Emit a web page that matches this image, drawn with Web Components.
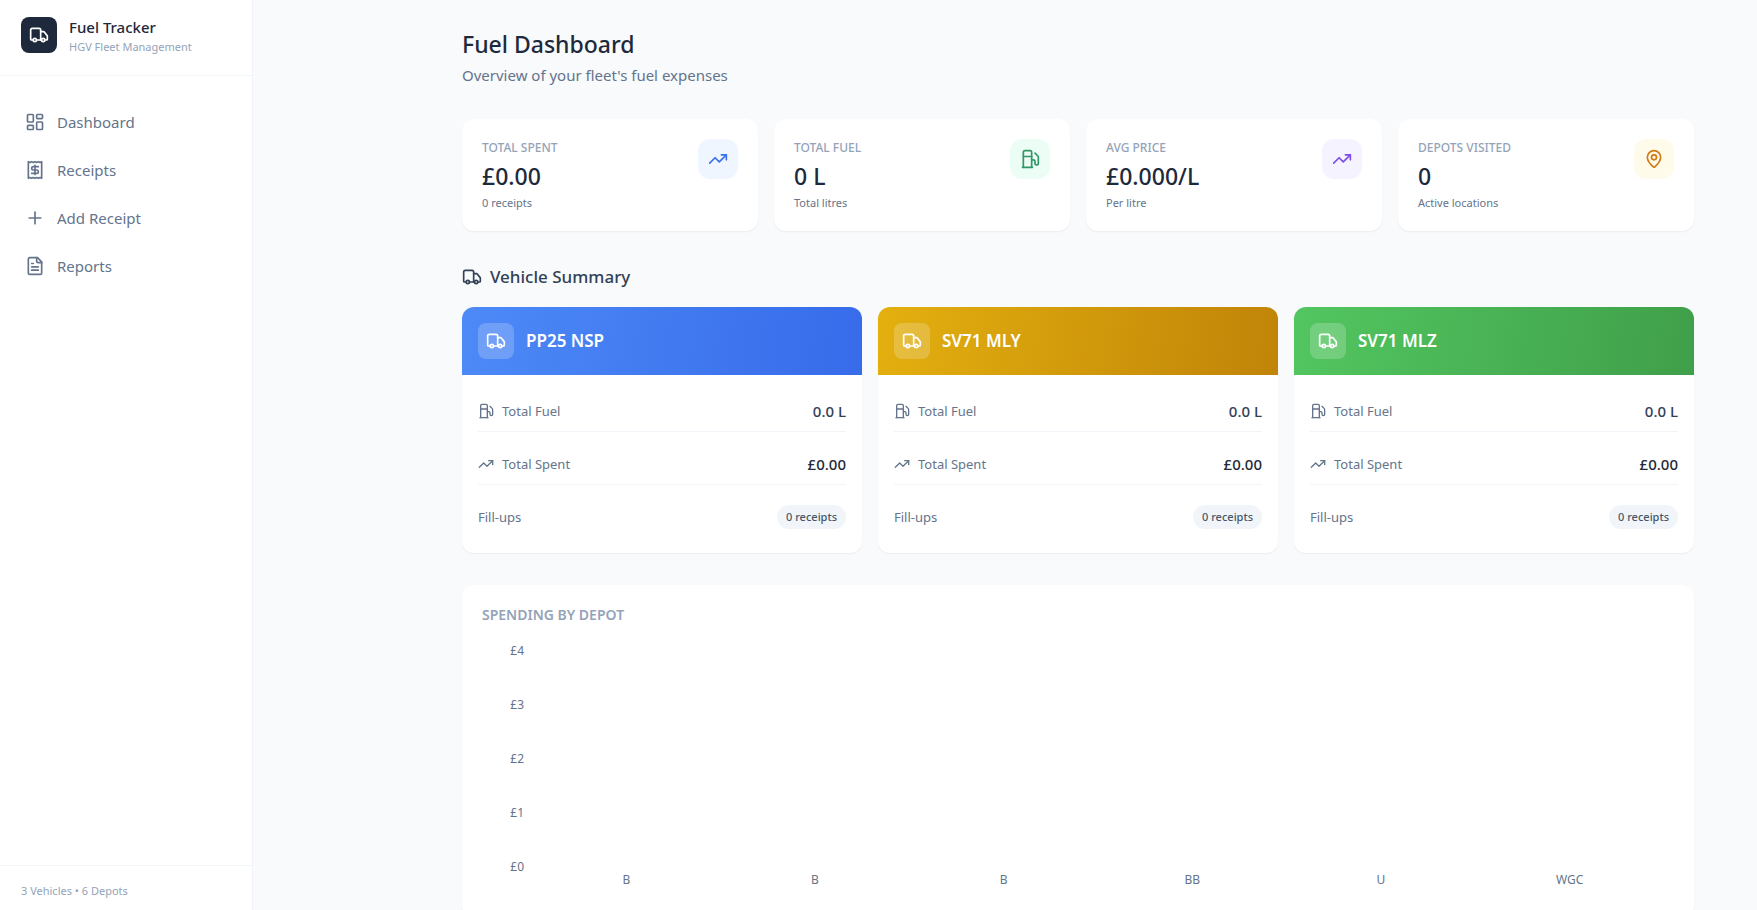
<!DOCTYPE html>
<html lang="en">
<head>
<meta charset="utf-8">
<meta name="viewport" content="width=device-width, initial-scale=1">
<title>Fuel Tracker</title>
<style>
  body { margin: 0; font-family: "Noto Sans", "Open Sans", sans-serif; color: #1e293b; background: #f8fafc; }
</style>
</head>
<body>
<fuel-app></fuel-app>
<script>
const ICONS = {
  truck: '<path d="M14 18V6a2 2 0 0 0-2-2H4a2 2 0 0 0-2 2v11a1 1 0 0 0 1 1h2"/><path d="M15 18H9"/><path d="M19 18h2a1 1 0 0 0 1-1v-3.65a1 1 0 0 0-.22-.624l-3.48-4.35A1 1 0 0 0 17.52 8H14"/><circle cx="17" cy="18" r="2"/><circle cx="7" cy="18" r="2"/>',
  dashboard: '<rect width="7" height="9" x="3" y="3" rx="1"/><rect width="7" height="5" x="14" y="3" rx="1"/><rect width="7" height="9" x="14" y="12" rx="1"/><rect width="7" height="5" x="3" y="16" rx="1"/>',
  receipt: '<path d="M4 2v20l2-1 2 1 2-1 2 1 2-1 2 1 2-1 2 1V2l-2 1-2-1-2 1-2-1-2 1-2-1-2 1Z"/><path d="M16 8h-6a2 2 0 1 0 0 4h4a2 2 0 1 1 0 4H8"/><path d="M12 17.5v-11"/>',
  plus: '<path d="M5 12h14"/><path d="M12 5v14"/>',
  file: '<path d="M15 2H6a2 2 0 0 0-2 2v16a2 2 0 0 0 2 2h12a2 2 0 0 0 2-2V7Z"/><path d="M14 2v4a2 2 0 0 0 2 2h4"/><path d="M10 9H8"/><path d="M16 13H8"/><path d="M16 17H8"/>',
  trend: '<path d="M22 7l-8.5 8.5-5-5L2 17"/><path d="M16 7h6v6"/>',
  fuel: '<path d="M3 22h12"/><path d="M4 9h10"/><path d="M14 22V4a2 2 0 0 0-2-2H6a2 2 0 0 0-2 2v18"/><path d="M14 13h2a2 2 0 0 1 2 2v2a2 2 0 0 0 2 2a2 2 0 0 0 2-2V9.830a2 2 0 0 0-.59-1.420L18 5"/>',
  pin: '<path d="M20 10c0 4.993-5.539 10.193-7.399 11.799a1 1 0 0 1-1.202 0C9.539 20.193 4 14.993 4 10a8 8 0 0 1 16 0"/><circle cx="12" cy="10" r="3"/>'
};

class AppIcon extends HTMLElement {
  connectedCallback() {
    if (this.shadowRoot) return;
    this.attachShadow({ mode: 'open' }).innerHTML = `
      <style>
        :host { display: block; flex: none; width: var(--icon-size, 20px); height: var(--icon-size, 20px); }
        svg { display: block; width: 100%; height: 100%; fill: none; stroke: currentColor; stroke-width: 2; stroke-linecap: round; stroke-linejoin: round; }
      </style>
      <svg viewBox="0 0 24 24" aria-hidden="true">${ICONS[this.getAttribute('name')]}</svg>`;
  }
}
customElements.define('app-icon', AppIcon);

class NavItem extends HTMLElement {
  connectedCallback() {
    if (this.shadowRoot) return;
    this.attachShadow({ mode: 'open' }).innerHTML = `
      <style>
        :host { display: block; }
        a { display: flex; align-items: center; gap: 12px; height: 44px; padding: 0 12px; border-radius: 8px; color: #64748b; font-size: 15px; line-height: 24px; text-decoration: none; }
        a:hover { background: #f1f5f9; }
      </style>
      <a href="#${this.getAttribute('to')}"><app-icon name="${this.getAttribute('icon')}"></app-icon><slot></slot></a>`;
  }
}
customElements.define('nav-item', NavItem);

class SideBar extends HTMLElement {
  connectedCallback() {
    if (this.shadowRoot) return;
    this.attachShadow({ mode: 'open' }).innerHTML = `
      <style>
        :host { display: flex; flex-direction: column; flex: none; box-sizing: border-box; width: 253px; background: #fff; border-right: 1px solid #f1f5f9; }
        header { display: flex; gap: 12px; padding: 17px 21px 18px; border-bottom: 1px solid #f1f5f9; }
        .logo { display: grid; place-items: center; width: 36px; height: 36px; border-radius: 8px; background: #1e293b; color: #fff; }
        .name { font-size: 15px; line-height: 20px; font-weight: 500; }
        .tag { font-size: 11px; line-height: 20px; color: #94a3b8; }
        nav { display: flex; flex-direction: column; gap: 4px; flex: 1; padding: 24px 13px; }
        footer { padding: 17px 21px 11px; border-top: 1px solid #f1f5f9; font-size: 11px; line-height: 16px; color: #94a3b8; }
      </style>
      <header>
        <div class="logo"><app-icon name="truck"></app-icon></div>
        <div><div class="name">Fuel Tracker</div><div class="tag">HGV Fleet Management</div></div>
      </header>
      <nav>
        <nav-item icon="dashboard" to="dashboard">Dashboard</nav-item>
        <nav-item icon="receipt" to="receipts">Receipts</nav-item>
        <nav-item icon="plus" to="add">Add Receipt</nav-item>
        <nav-item icon="file" to="reports">Reports</nav-item>
      </nav>
      <footer>3 Vehicles • 6 Depots</footer>`;
  }
}
customElements.define('side-bar', SideBar);

class StatCard extends HTMLElement {
  connectedCallback() {
    if (this.shadowRoot) return;
    const a = n => this.getAttribute(n);
    this.attachShadow({ mode: 'open' }).innerHTML = `
      <style>
        :host { display: flex; justify-content: space-between; align-items: flex-start; padding: 20px; border-radius: 12px; background: #fff; box-shadow: 0 1px 2px rgba(15, 23, 42, .06); }
        .label { font-size: 12px; line-height: 18px; font-weight: 500; color: #94a3b8; text-transform: uppercase; }
        .value { margin: 3px 0; font-size: 23px; line-height: 32px; font-weight: 500; }
        .note { font-size: 11px; line-height: 16px; color: #64748b; }
        .badge { display: grid; place-items: center; width: 40px; height: 40px; border-radius: 12px; }
        .blue { background: #eff6ff; color: #3b6fed; }
        .green { background: #ecfdf5; color: #319668; }
        .violet { background: #f5f3ff; color: #7c4dea; }
        .amber { background: #fffbeb; color: #d17a12; }
      </style>
      <div>
        <div class="label">${a('label')}</div>
        <div class="value">${a('value')}</div>
        <div class="note">${a('note')}</div>
      </div>
      <div class="badge ${a('tone')}"><app-icon name="${a('icon')}"></app-icon></div>`;
  }
}
customElements.define('stat-card', StatCard);

class VehicleCard extends HTMLElement {
  connectedCallback() {
    if (this.shadowRoot) return;
    this.attachShadow({ mode: 'open' }).innerHTML = `
      <style>
        :host { display: block; overflow: hidden; border-radius: 12px; background: #fff; box-shadow: 0 1px 2px rgba(15, 23, 42, .06); }
        header { display: flex; align-items: center; gap: 12px; padding: 16px; color: #fff; }
        .blue { background: linear-gradient(100deg, #4d8af7, #376bea); }
        .yellow { background: linear-gradient(100deg, #e3b00f, #c08408); }
        .green { background: linear-gradient(100deg, #52c660, #409f4a); }
        .badge { display: grid; place-items: center; width: 36px; height: 36px; border-radius: 8px; background: rgba(255, 255, 255, .2); }
        h3 { margin: 0; font-size: 17px; line-height: 28px; font-weight: 600; }
        dl { display: grid; gap: 12px; margin: 0; padding: 16px; }
        dl div { display: flex; justify-content: space-between; align-items: center; padding: 8px 0; border-bottom: 1px solid #f1f5f9; }
        dl div:last-child { border-bottom: 0; }
        dt { display: flex; align-items: center; gap: 8px; font-size: 13px; line-height: 20px; color: #64748b; --icon-size: 16px; }
        dd { margin: 0; font-size: 15px; line-height: 24px; font-weight: 500; }
        .fuel { color: #334155; }
        .pill { padding: 0 9px; border-radius: 12px; background: #f1f5f9; color: #475569; font-size: 11px; }
      </style>
      <header class="${this.getAttribute('tone')}">
        <div class="badge"><app-icon name="truck"></app-icon></div>
        <h3><slot></slot></h3>
      </header>
      <dl>
        <div><dt><app-icon name="fuel"></app-icon>Total Fuel</dt><dd class="fuel">0.0 L</dd></div>
        <div><dt><app-icon name="trend"></app-icon>Total Spent</dt><dd>£0.00</dd></div>
        <div><dt>Fill-ups</dt><dd class="pill">0 receipts</dd></div>
      </dl>`;
  }
}
customElements.define('vehicle-card', VehicleCard);

class DepotChart extends HTMLElement {
  connectedCallback() {
    if (this.shadowRoot) return;
    const spans = list => list.split(',').map(t => `<span>${t}</span>`).join('');
    this.attachShadow({ mode: 'open' }).innerHTML = `
      <style>
        :host { display: block; padding: 20px 20px 31px; border-radius: 12px; background: #fff; box-shadow: 0 1px 2px rgba(15, 23, 42, .06); }
        h2 { margin: 0 0 20px; font-size: 14px; line-height: 20px; font-weight: 600; color: #94a3b8; text-transform: uppercase; }
        .chart { display: grid; grid-template-columns: 42px 1fr; column-gap: 8px; row-gap: 1px; padding-right: 10px; font-size: 12px; line-height: 12px; color: #64748b; }
        .y { display: flex; flex-direction: column; justify-content: space-between; height: 228px; text-align: right; }
        .x { grid-area: 2 / 2; display: grid; grid-auto-flow: column; grid-auto-columns: 1fr; text-align: center; }
      </style>
      <h2><slot></slot></h2>
      <div class="chart">
        <div class="y">${spans(this.getAttribute('ticks'))}</div>
        <div class="x">${spans(this.getAttribute('depots'))}</div>
      </div>`;
  }
}
customElements.define('depot-chart', DepotChart);

class FuelApp extends HTMLElement {
  connectedCallback() {
    if (this.shadowRoot) return;
    this.attachShadow({ mode: 'open' }).innerHTML = `
      <style>
        :host { display: flex; height: 100vh; }
        main { flex: 1; min-width: 0; padding-left: 146px; overflow-y: auto; scrollbar-width: none; }
        .page { box-sizing: border-box; max-width: 1280px; margin: 0 auto; padding: 28px 24px; }
        h1 { margin: 0 0 3px; font-size: 23px; line-height: 32px; font-weight: 500; }
        p { margin: 0 0 32px; font-size: 15px; line-height: 24px; color: #64748b; }
        .stats { display: grid; grid-template-columns: repeat(4, 1fr); gap: 16px; }
        h2 { display: flex; align-items: center; gap: 8px; margin: 32px 0 16px; font-size: 17px; line-height: 28px; font-weight: 500; color: #334155; }
        .vehicles { display: grid; grid-template-columns: repeat(3, 1fr); gap: 16px; margin-bottom: 32px; }
      </style>
      <side-bar></side-bar>
      <main>
        <div class="page">
          <h1>Fuel Dashboard</h1>
          <p>Overview of your fleet's fuel expenses</p>
          <div class="stats">
            <stat-card label="Total Spent" value="£0.00" note="0 receipts" icon="trend" tone="blue"></stat-card>
            <stat-card label="Total Fuel" value="0 L" note="Total litres" icon="fuel" tone="green"></stat-card>
            <stat-card label="Avg Price" value="£0.000/L" note="Per litre" icon="trend" tone="violet"></stat-card>
            <stat-card label="Depots Visited" value="0" note="Active locations" icon="pin" tone="amber"></stat-card>
          </div>
          <h2><app-icon name="truck"></app-icon>Vehicle Summary</h2>
          <div class="vehicles">
            <vehicle-card tone="blue">PP25 NSP</vehicle-card>
            <vehicle-card tone="yellow">SV71 MLY</vehicle-card>
            <vehicle-card tone="green">SV71 MLZ</vehicle-card>
          </div>
          <depot-chart ticks="£4,£3,£2,£1,£0" depots="B,B,B,BB,U,WGC">Spending by Depot</depot-chart>
        </div>
      </main>`;
  }
}
customElements.define('fuel-app', FuelApp);
</script>
</body>
</html>
